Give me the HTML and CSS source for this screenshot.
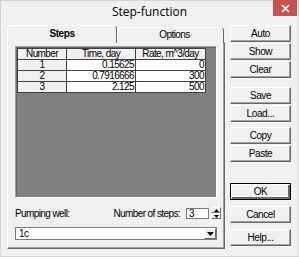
FILE: index.html
```html
<!DOCTYPE html>
<html>
<head>
<meta charset="utf-8">
<link rel="stylesheet" href="styles.css">
</head>
<body>
<div class="window">
  <div class="titlebar">
    <span class="title">Step-function</span>
    <span class="close"><svg width="9" height="9" viewBox="0 0 9 9"><path d="M1 1L8 8M8 1L1 8" stroke="#fff" stroke-width="1.6"/></svg></span>
  </div>
  <div class="client">
    <div class="pages">
      <div class="tabrow">
        <div class="tab active">Steps</div>
        <div class="tab opt">Options</div>
      </div>
      <div class="sheet">
        <div class="grid">
          <table class="tbl">
            <tr><th class="c1">Number</th><th class="c2">Time, day</th><th class="c3">Rate, m^3/day</th></tr>
            <tr><td class="fix">1</td><td>0.15625</td><td>0</td></tr>
            <tr><td class="fix">2</td><td>0.7916666</td><td>300</td></tr>
            <tr><td class="fix">3</td><td>2.125</td><td>500</td></tr>
          </table>
        </div>
        <div class="labels">
          <span class="lbl">Pumping well:</span>
          <span class="lbl steps">Number of steps:</span>
          <div class="spin">
            <div class="spinedit">3</div>
            <div class="spinbtns">
              <div class="sb"><svg width="5" height="3" viewBox="0 0 5 3"><path d="M2.5 0L5 3H0Z" fill="#000"/></svg></div>
              <div class="sb"><svg width="5" height="3" viewBox="0 0 5 3"><path d="M0 0H5L2.5 3Z" fill="#000"/></svg></div>
            </div>
          </div>
        </div>
        <div class="combo">
          <span class="cval">1c</span>
          <span class="cbtn"><svg width="7" height="4" viewBox="0 0 7 4"><path d="M0 0H7L3.5 4Z" fill="#000"/></svg></span>
        </div>
      </div>
    </div>
    <div class="buttons">
      <div class="group">
        <div class="btn">Auto</div>
        <div class="btn">Show</div>
        <div class="btn">Clear</div>
      </div>
      <div class="group">
        <div class="btn">Save</div>
        <div class="btn">Load...</div>
      </div>
      <div class="group">
        <div class="btn">Copy</div>
        <div class="btn">Paste</div>
      </div>
      <div class="group g2">
        <div class="btn default">OK</div>
        <div class="btn">Cancel</div>
        <div class="btn">Help...</div>
      </div>
    </div>
  </div>
</div>
</body>
</html>
```
FILE: styles.css
```css
* { box-sizing: border-box; }
html, body { margin: 0; padding: 0; background: #f0f0f0; }
body { font-family: "Liberation Sans", Arial, sans-serif; font-size: 10px; letter-spacing: -0.6px; color: #000; white-space: nowrap; }
.window {
  width: 299px; height: 257px; background: #f0f0f0;
  display: flex; flex-direction: column;
  border: 1px solid #d4d4d4;
}
.titlebar {
  height: 19px; position: relative;
  display: flex; align-items: center; justify-content: center;
  background: #f0f0f0;
}
.title { font-family: "Open Sans", "Liberation Sans", sans-serif; font-size: 12px; letter-spacing: 0; color: #000; margin-top: 1px; }
.close {
  position: absolute; right: 1px; top: -1px; width: 24px; height: 16px;
  background: #c75050; display: flex; align-items: center; justify-content: center;
}
.client { display: flex; padding: 5px 0 0 6px; flex: 1; }
.pages { width: 218px; display: flex; flex-direction: column; }
.tabrow { display: flex; height: 17px; position: relative; z-index: 1; }
.tab {
  text-align: center; line-height: 14px; height: 16px; margin-top: 2px;
  border: 1px solid #fff; border-right-color: #696969; border-bottom: none;
  border-radius: 4px 4px 0 0; background: #f0f0f0;
}
.tab:first-child { width: 110px; }
.tab.opt { width: 107px; padding-left: 8px; }
.tab.active { margin-top: 0; height: 18px; font-weight: bold; line-height: 16px; letter-spacing: -0.4px; }
.sheet {
  height: 207px; border: 1px solid #fff; border-right-color: #696969; border-bottom-color: #696969;
  box-shadow: inset -1px -1px 0 #a0a0a0;
  padding: 3px 7px 0 7px;
  display: flex; flex-direction: column;
}
.grid {
  height: 152px; background: #808080;
  border: 1px solid #a0a0a0; border-right-color: #fff; border-bottom-color: #fff;
  box-shadow: inset 1px 1px 0 #696969;
  padding: 1px 0 0 1px;
}
.tbl { border-collapse: collapse; table-layout: fixed; }
.tbl th, .tbl td {
  height: 11px; padding: 0 1px; font-weight: normal; line-height: 10px;
  border: 1px solid #404040; overflow: hidden;
}
.tbl th { background: #f0f0f0; text-align: center; }
.tbl td { background: #fff; text-align: right; }
.tbl td.fix { background: #f0f0f0; text-align: center; }
.c1 { width: 49px; }
.c2 { width: 69px; }
.c3 { width: 70px; }
.labels { display: flex; align-items: flex-end; height: 22px; padding-bottom: 1px; }
.lbl { line-height: 11px; }
.steps { margin-left: 44px; }
.spin { display: flex; margin-left: 6px; align-items: center; }
.spinedit {
  width: 23px; height: 11px; background: #fff; line-height: 9px; padding-left: 2px;
  border: 1px solid #7a7a7a; font-size: 10px;
}
.spinbtns { display: flex; flex-direction: column; margin-left: 2px; }
.sb {
  width: 10px; height: 6px; background: #f0f0f0; display: flex; align-items: center; justify-content: center;
  border: 1px solid #fff; border-right-color: #696969; border-bottom-color: #696969;
}
.combo {
  margin-top: 7px; height: 13px; background: #fff; border: 1px solid #7a7a7a;
  display: flex; align-items: center; justify-content: space-between;
  font-size: 10px;
}
.cval { padding-left: 3px; }
.cbtn {
  width: 12px; height: 11px; background: #f0f0f0; display: flex; align-items: center; justify-content: center;
  border: 1px solid #fff; border-right-color: #696969; border-bottom-color: #696969;
}
.buttons { margin-left: 5px; width: 61px; display: flex; flex-direction: column; }
.group { display: flex; flex-direction: column; gap: 1px; margin-bottom: 8px; }
.group:first-child { margin-bottom: 9px; }
.group:nth-child(2) { margin-bottom: 5px; }
.group.g2 { margin-top: 13px; gap: 6px; }
.btn {
  height: 17px; text-align: center; line-height: 15px; font-size: 10px; letter-spacing: -0.4px;
  background: #f0f0f0; border: 1px solid #fff; border-right-color: #696969; border-bottom-color: #696969;
  box-shadow: inset -1px -1px 0 #a0a0a0;
}
.btn.default { border-color: #000; box-shadow: inset 1px 1px 0 #fff, inset -2px -2px 0 #696969; }
```
